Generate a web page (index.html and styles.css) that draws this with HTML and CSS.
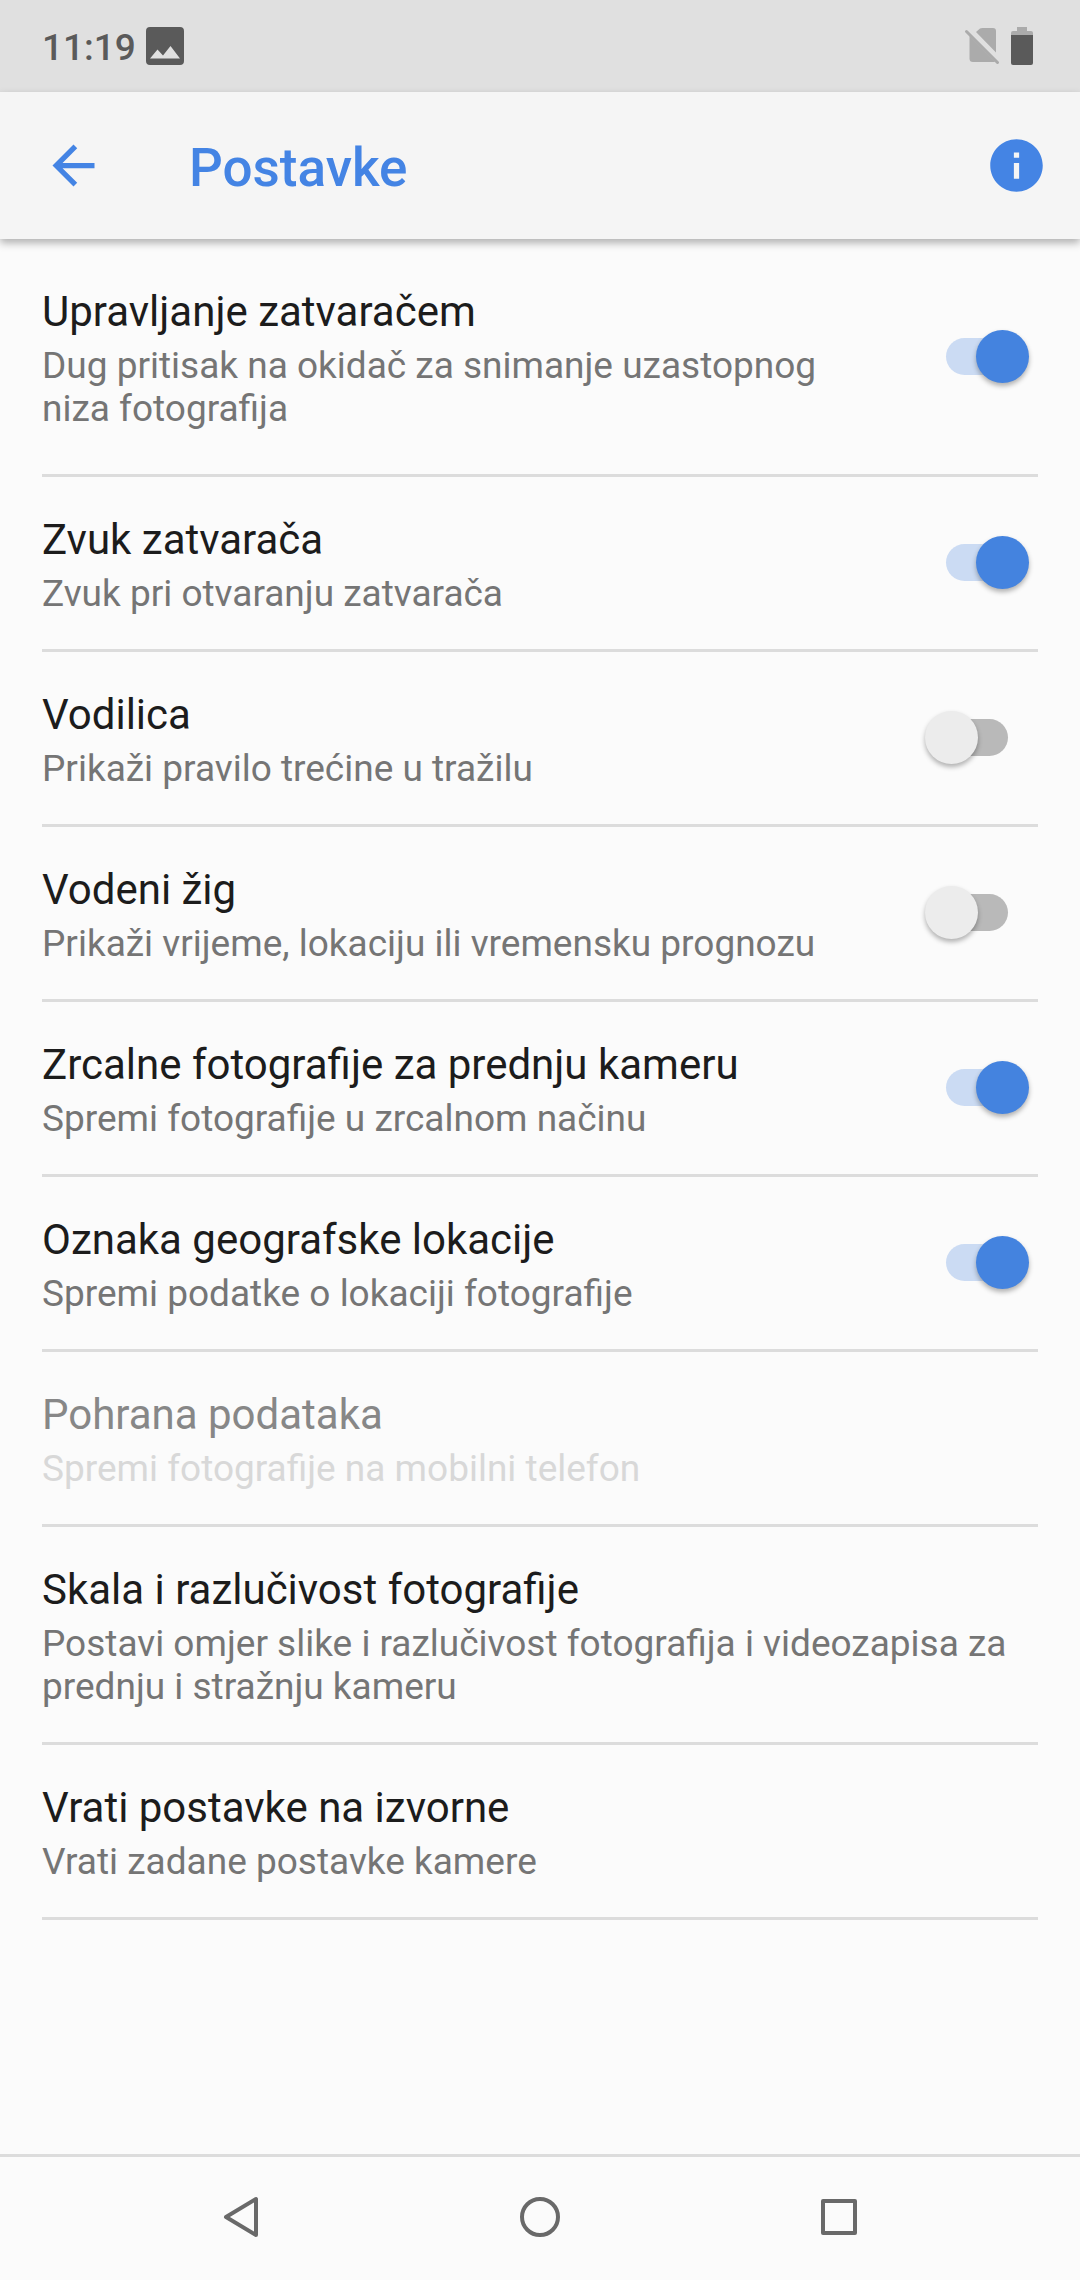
FILE: index.html
```html
<!DOCTYPE html>
<html lang="hr">
<head>
<meta charset="utf-8">
<meta name="viewport" content="width=device-width, initial-scale=1">
<title>Postavke</title>
<link rel="stylesheet" href="styles.css">
</head>
<body>
<div class="status-bar">
  <span class="clock">11:19</span>
  <svg class="status-photo" viewBox="0 0 38 38" aria-hidden="true"><path fill="#5a5a5a" fill-rule="evenodd" d="M4 0h30a4 4 0 0 1 4 4v30a4 4 0 0 1-4 4H4a4 4 0 0 1-4-4V4a4 4 0 0 1 4-4zM4 31.500h30L24.500 19l-7.500 9.500-5.500-6z"/></svg>
  <div class="status-end">
    <svg class="status-sim" viewBox="0 0 36 38" aria-hidden="true"><path fill="#ababab" d="M12 5l4-3.500Q17 1 18.500 1H29q3 0 3 3v21.500zM5.500 9L31 34.500Q30.500 35 29 35H9q-3.500 0-3.500-3.500z"/><path stroke="#ababab" stroke-width="3" stroke-linecap="round" d="M2.500 4.500l31 31"/></svg>
    <svg class="status-battery" viewBox="0 0 22 38" aria-hidden="true"><path fill="#ababab" d="M6 0h10v4h4q2 0 2 2v3H0V6q0-2 2-2h4z"/><path fill="#5a5a5a" d="M0 8h22v28q0 2-2 2H2q-2 0-2-2z"/></svg>
  </div>
</div>
<header class="app-bar">
  <button class="icon-button" type="button" aria-label="Natrag"><svg viewBox="0 0 24 24" fill="#4484e4"><path d="M20 11H7.830l5.590-5.590L12 4l-8 8 8 8 1.410-1.410L7.830 13H20v-2z"/></svg></button>
  <h1 class="app-title">Postavke</h1>
  <button class="icon-button" type="button" aria-label="Informacije"><svg viewBox="0 0 24 24" fill="#4484e4"><path d="M12 2C6.480 2 2 6.480 2 12s4.480 10 10 10 10-4.480 10-10S17.520 2 12 2zm1 15h-2v-6h2v6zm0-8h-2V7h2v2z"/></svg></button>
</header>
<main class="settings">
  <label class="row row-first">
    <span class="row-text"><span class="row-title">Upravljanje zatvaračem</span><span class="row-summary">Dug pritisak na okidač za snimanje uzastopnog niza fotografija</span></span>
    <input class="switch" type="checkbox" role="switch" checked>
  </label>
  <label class="row">
    <span class="row-text"><span class="row-title">Zvuk zatvarača</span><span class="row-summary">Zvuk pri otvaranju zatvarača</span></span>
    <input class="switch" type="checkbox" role="switch" checked>
  </label>
  <label class="row">
    <span class="row-text"><span class="row-title">Vodilica</span><span class="row-summary">Prikaži pravilo trećine u tražilu</span></span>
    <input class="switch" type="checkbox" role="switch">
  </label>
  <label class="row">
    <span class="row-text"><span class="row-title">Vodeni žig</span><span class="row-summary">Prikaži vrijeme, lokaciju ili vremensku prognozu</span></span>
    <input class="switch" type="checkbox" role="switch">
  </label>
  <label class="row">
    <span class="row-text"><span class="row-title">Zrcalne fotografije za prednju kameru</span><span class="row-summary">Spremi fotografije u zrcalnom načinu</span></span>
    <input class="switch" type="checkbox" role="switch" checked>
  </label>
  <label class="row">
    <span class="row-text"><span class="row-title">Oznaka geografske lokacije</span><span class="row-summary">Spremi podatke o lokaciji fotografije</span></span>
    <input class="switch" type="checkbox" role="switch" checked>
  </label>
  <button class="row" type="button" disabled>
    <span class="row-text"><span class="row-title">Pohrana podataka</span><span class="row-summary">Spremi fotografije na mobilni telefon</span></span>
  </button>
  <button class="row" type="button">
    <span class="row-text"><span class="row-title">Skala i razlučivost fotografije</span><span class="row-summary">Postavi omjer slike i razlučivost fotografija i videozapisa za prednju i stražnju kameru</span></span>
  </button>
  <button class="row" type="button">
    <span class="row-text"><span class="row-title">Vrati postavke na izvorne</span><span class="row-summary">Vrati zadane postavke kamere</span></span>
  </button>
</main>
<nav class="nav-bar">
  <button class="nav-button" type="button" aria-label="Natrag"><svg viewBox="0 0 48 48"><path d="M39 6v36L9 24z"/></svg></button>
  <button class="nav-button" type="button" aria-label="Početni zaslon"><svg viewBox="0 0 48 48"><circle cx="24" cy="24" r="18"/></svg></button>
  <button class="nav-button" type="button" aria-label="Nedavno"><svg viewBox="0 0 48 48"><path d="M8 8h32v32H8z"/></svg></button>
</nav>
</body>
</html>
```
FILE: styles.css
```css
* {
  box-sizing: border-box;
}

body {
  margin: 0;
  min-height: 100vh;
  display: flex;
  flex-direction: column;
  background: #fbfbfb;
  color: #1c1c1c;
  font-family: Roboto, "Noto Sans", sans-serif;
}

button {
  margin: 0;
  padding: 0;
  border: 0;
  background: none;
  color: inherit;
  font: inherit;
  text-align: left;
}

svg {
  display: block;
}

/* Status bar */
.status-bar {
  display: flex;
  align-items: center;
  gap: 10px;
  height: 92px;
  padding: 0 47px 0 42px;
  background: #e0e0e0;
  color: #5a5a5a;
}

.clock {
  padding-top: 3px;
  font-size: 37px;
  font-weight: 500;
  line-height: 43px;
}

.status-photo {
  width: 38px;
  height: 38px;
}

.status-end {
  display: flex;
  gap: 11px;
  margin-left: auto;
}

.status-sim {
  width: 36px;
  height: 38px;
}

.status-battery {
  width: 22px;
  height: 38px;
}

/* App bar */
.app-bar {
  display: flex;
  align-items: center;
  height: 147px;
  padding: 0 32px 1px 42px;
  background: #f5f5f5;
  box-shadow: 0 4px 8px rgba(0, 0, 0, 0.3);
}

.icon-button,
.icon-button svg {
  width: 63px;
  height: 63px;
}

.app-title {
  flex: 1;
  margin: 0;
  padding: 6px 0 0 84px;
  color: #4484e4;
  font-size: 53px;
  font-weight: 500;
  line-height: 63px;
}

/* Settings list */
.settings {
  display: flex;
  flex-direction: column;
  padding: 0 42px;
}

.row {
  display: flex;
  align-items: center;
  padding: 34px 0;
  border-bottom: 3px solid #dcdcdc;
}

.row-first {
  padding: 44px 0;
}

.row-text {
  flex: 1;
  display: flex;
  flex-direction: column;
  gap: 6px;
  padding-top: 3px;
}

.row-title {
  font-size: 42px;
  line-height: 52px;
}

.row-summary {
  color: #757575;
  font-size: 37px;
  line-height: 43px;
}

.row:disabled .row-title {
  color: #878787;
}

.row:disabled .row-summary {
  color: #d8d8d8;
}

/* Switch */
.switch {
  appearance: none;
  display: grid;
  align-items: center;
  width: 104px;
  height: 53px;
  margin: 0 9px 1px 42px;
}

.switch::before,
.switch::after {
  content: "";
  grid-area: 1 / 1;
}

.switch::before {
  height: 37px;
  margin: 0 21px;
  border-radius: 19px;
  background: #b9b9b9;
}

.switch::after {
  width: 53px;
  height: 53px;
  border-radius: 50%;
  background: #ececec;
  box-shadow: 0 3px 5px rgba(0, 0, 0, 0.3);
}

.switch:checked::before {
  background: #cbdbf3;
}

.switch:checked::after {
  justify-self: end;
  background: #4483df;
}

/* Navigation bar */
.nav-bar {
  display: flex;
  height: 126px;
  margin-top: auto;
  padding: 0 92px 3px;
  border-top: 3px solid #dcdcdc;
}

.nav-button {
  flex: 1;
  display: flex;
  align-items: center;
  justify-content: center;
}

.nav-button svg {
  width: 48px;
  height: 48px;
  fill: none;
  stroke: #696969;
  stroke-width: 4;
  stroke-linejoin: round;
}
```
